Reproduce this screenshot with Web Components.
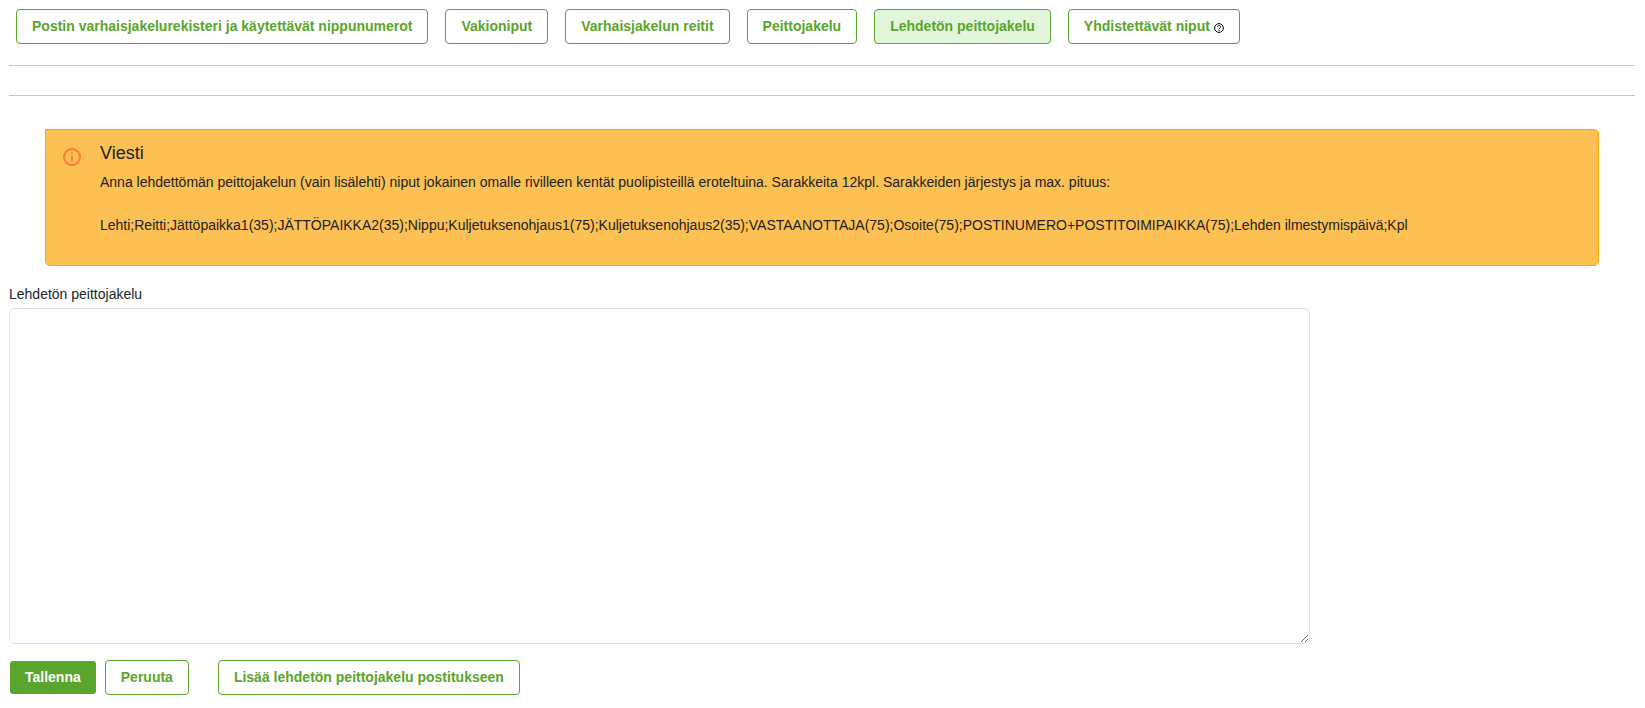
<!DOCTYPE html>
<html lang="fi">
<head>
<meta charset="utf-8">
<title>Lehdetön peittojakelu</title>
<style>
body { margin: 9px 10px 9px 9px; font: 14px/21px "Liberation Sans", Arial, sans-serif; color: #212529; background: #fff; }
</style>
</head>
<body>
<delivery-page></delivery-page>
<script>
class BaseElement extends HTMLElement {
  connectedCallback() {
    if (this.shadowRoot) return;
    this.attachShadow({ mode: "open" }).innerHTML = this.render();
  }
}

class AppButton extends BaseElement {
  render() {
    return `<style>
      :host { display: block; }
      button { display: flex; align-items: center; gap: 4px; margin: 0; padding: 6px 15px; border: 1px solid #5aa52c; border-radius: 4px;
        background: #fff; color: #5aa52c; font: bold 14px/21px "Liberation Sans", Arial, sans-serif; white-space: nowrap; cursor: pointer; }
      :host([active]) button { background: #e2f6dc; }
      :host([primary]) { padding: 1px; }
      :host([primary]) button { border: 0; border-radius: 3px; background: #5aa52c; color: #fff; }
    </style><button type="button"><slot></slot></button>`;
  }
}

class HelpIcon extends BaseElement {
  render() {
    return `<style>
      :host { display: block; padding-top: 2px; }
      svg { display: block; width: 10px; height: 10px; }
    </style><svg viewBox="0 0 20 20" fill="none" stroke="#000" stroke-width="2" aria-hidden="true">
      <circle cx="10" cy="10" r="8.8"/><path d="M7 8a3 3 0 1 1 4.8 2.4c-1.2.8-1.8 1.2-1.8 2.2M10 14v2"/></svg>`;
  }
}

class TabBar extends BaseElement {
  render() {
    return `<style>
      :host { display: block; border-bottom: 1px solid #c8c8c8; padding: 0 7px 21px; }
      nav { display: flex; flex-wrap: wrap; gap: 17px; }
    </style><nav><slot></slot></nav>`;
  }
}

class MessageBox extends BaseElement {
  render() {
    return `<style>
      :host { display: flex; gap: 19px; margin: 33px 36px 18px; padding: 12px 17px 29px; border: 1px solid #ffa60d;
        border-radius: 0 5px 5px 5px; background: #fdc053; color: #212121; }
      svg { flex: none; width: 18px; height: 18px; margin-top: 6px; }
      h2 { margin: 0 0 8px; font-size: 18px; line-height: 22px; font-weight: normal; }
    </style>
    <svg viewBox="0 0 18 18" fill="none" stroke="#ff7a33" stroke-width="2" aria-hidden="true"><circle cx="9" cy="9" r="8"/><path d="M9 4.5v2M9 8v5.5"/></svg>
    <div><h2><slot name="title"></slot></h2><slot></slot></div>`;
  }
}

class TextField extends BaseElement {
  render() {
    return `<style>
      :host { display: block; }
      label { display: block; margin-bottom: 3px; }
      textarea { display: block; box-sizing: border-box; width: 80%; height: 336px; margin: 0; padding: 6px 12px; border: 1px solid #dee2e6;
        border-radius: 5px; background: #fff; color: inherit; font: inherit; }
    </style><label for="field">${this.getAttribute("label")}</label><textarea id="field"></textarea>`;
  }
}

class DeliveryPage extends BaseElement {
  render() {
    return `<style>
      :host { display: block; }
      hr { margin: 29px 0 0; border: 0; border-top: 1px solid #c8c8c8; }
      p { margin: 0 0 22px; }
      p:last-child { margin: 0; }
      .actions { display: flex; flex-wrap: wrap; gap: 8px; margin-top: 16px; }
      .extra { margin-left: 21px; }
    </style>
    <tab-bar>
      <app-button>Postin varhaisjakelurekisteri ja käytettävät nippunumerot</app-button>
      <app-button>Vakioniput</app-button>
      <app-button>Varhaisjakelun reitit</app-button>
      <app-button>Peittojakelu</app-button>
      <app-button active>Lehdetön peittojakelu</app-button>
      <app-button>Yhdistettävät niput <help-icon></help-icon></app-button>
    </tab-bar>
    <hr>
    <message-box>
      <span slot="title">Viesti</span>
      <p>Anna lehdettömän peittojakelun (vain lisälehti) niput jokainen omalle rivilleen kentät puolipisteillä eroteltuina. Sarakkeita 12kpl. Sarakkeiden järjestys ja max. pituus:</p>
      <p>Lehti;Reitti;Jättöpaikka1(35);JÄTTÖPAIKKA2(35);Nippu;Kuljetuksenohjaus1(75);Kuljetuksenohjaus2(35);VASTAANOTTAJA(75);Osoite(75);POSTINUMERO+POSTITOIMIPAIKKA(75);Lehden ilmestymispäivä;Kpl</p>
    </message-box>
    <text-field label="Lehdetön peittojakelu"></text-field>
    <div class="actions">
      <app-button primary>Tallenna</app-button>
      <app-button>Peruuta</app-button>
      <app-button class="extra">Lisää lehdetön peittojakelu postitukseen</app-button>
    </div>`;
  }
}

customElements.define("app-button", AppButton);
customElements.define("help-icon", HelpIcon);
customElements.define("tab-bar", TabBar);
customElements.define("message-box", MessageBox);
customElements.define("text-field", TextField);
customElements.define("delivery-page", DeliveryPage);
</script>
</body>
</html>
